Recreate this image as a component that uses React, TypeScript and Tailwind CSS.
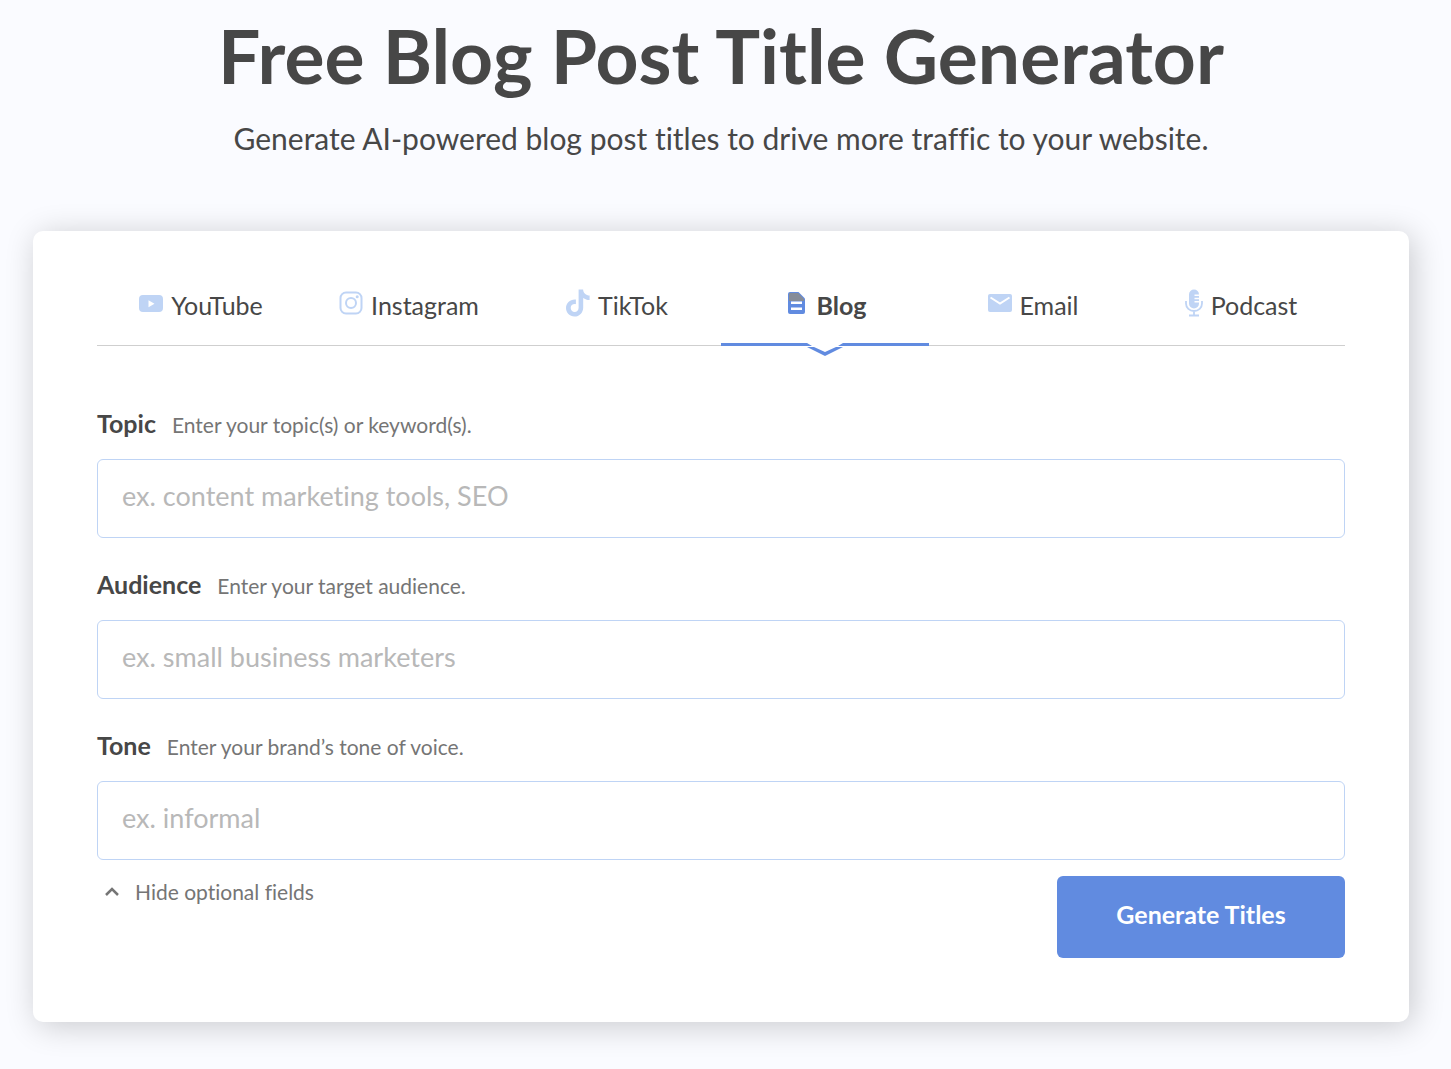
import { useState } from 'react';
import type { FormEvent, ReactNode } from 'react';

type Platform = {
  id: string;
  label: string;
  icon: ReactNode;
};

type Field = {
  id: string;
  label: string;
  hint: string;
  placeholder: string;
  optional: boolean;
};

const platforms: Platform[] = [
  {
    id: 'youtube',
    label: 'YouTube',
    icon: (
      <svg viewBox="0 0 24 17" className="mr-2 mb-1 h-[17px] w-6" fill="currentColor" aria-hidden="true">
        <path
          fillRule="evenodd"
          d="M4 0h16a4 4 0 0 1 4 4v9a4 4 0 0 1-4 4H4a4 4 0 0 1-4-4V4a4 4 0 0 1 4-4Zm5.5 5.200v7l6-3.500-6-3.500Z"
        />
      </svg>
    ),
  },
  {
    id: 'instagram',
    label: 'Instagram',
    icon: (
      <svg
        viewBox="0 0 24 24"
        className="mr-2 mb-1 size-6"
        fill="none"
        stroke="currentColor"
        strokeWidth="2"
        aria-hidden="true"
      >
        <rect x="1.5" y="1.5" width="21" height="21" rx="5.5" />
        <circle cx="12" cy="12" r="5" />
        <circle cx="18.2" cy="5.8" r="1.5" fill="currentColor" stroke="none" />
      </svg>
    ),
  },
  {
    id: 'tiktok',
    label: 'TikTok',
    icon: (
      <svg viewBox="0 0 24 27" className="mr-2 mb-1 h-7 w-6" fill="currentColor" aria-hidden="true">
        <path d="M12.6 0h4.5c.2 3.6 2.9 5.9 6.5 6.1v4.5c-2.5 0-4.6-.8-6.4-2.1v9.4c0 5.2-3.8 9.1-8.7 9.1C3.6 27 0 23.1 0 18.5c0-5.1 4.3-9.1 9.9-8.5v4.7c-3-.6-5.2 1.2-5.2 3.8 0 2.2 1.7 4 3.9 4 2.4 0 4-1.7 4-4.3Z" />
      </svg>
    ),
  },
  {
    id: 'blog',
    label: 'Blog',
    icon: (
      <svg viewBox="0 0 17 22" className="mr-3 mb-1 ml-1 h-[22px] w-[17px]" aria-hidden="true">
        <path
          fill="#618be0"
          d="M2 0h8.5L17 6.5V20a2 2 0 0 1-2 2H2a2 2 0 0 1-2-2V2a2 2 0 0 1 2-2Z"
        />
        <path fill="#858c99" d="M2 1h8.2L16 7v2H1V2a1 1 0 0 1 1-1Z" />
        <path fill="#fff" d="M3 9.500h11V12H3zM3 15.500h11V18H3z" />
      </svg>
    ),
  },
  {
    id: 'email',
    label: 'Email',
    icon: (
      <svg viewBox="0 0 24 18" className="mr-2 mb-1 h-[18px] w-6" aria-hidden="true">
        <rect width="24" height="18" rx="2" fill="currentColor" />
        <path d="m2.5 3.500 9.500 6 9.500-6" fill="none" stroke="#fff" strokeWidth="2" />
      </svg>
    ),
  },
  {
    id: 'podcast',
    label: 'Podcast',
    icon: (
      <svg viewBox="0 0 18 27" className="mr-2 mb-1 h-7 w-[18px]" fill="currentColor" aria-hidden="true">
        <path d="M9 0a5 5 0 0 1 5 5H9.500v1.500H14v1.700H9.500v1.500H14v1.700H9.500v1.500H14V14a5 5 0 0 1-10 0V5a5 5 0 0 1 5-5Z" />
        <path
          fill="none"
          stroke="currentColor"
          strokeWidth="1.8"
          d="M1 11.500V14c0 4.300 3.500 7.500 8 7.500s8-3.200 8-7.500v-2.500M9 21.500V26M4 26h10"
        />
      </svg>
    ),
  },
];

const fields: Field[] = [
  {
    id: 'topic',
    label: 'Topic',
    hint: 'Enter your topic(s) or keyword(s).',
    placeholder: 'ex. content marketing tools, SEO',
    optional: false,
  },
  {
    id: 'audience',
    label: 'Audience',
    hint: 'Enter your target audience.',
    placeholder: 'ex. small business marketers',
    optional: true,
  },
  {
    id: 'tone',
    label: 'Tone',
    hint: 'Enter your brand’s tone of voice.',
    placeholder: 'ex. informal',
    optional: true,
  },
];

function PlatformTab({
  platform,
  active,
  onSelect,
}: {
  platform: Platform;
  active: boolean;
  onSelect: () => void;
}) {
  return (
    <button
      type="button"
      role="tab"
      aria-selected={active}
      onClick={onSelect}
      className="relative flex h-[82px] flex-1 cursor-pointer items-center justify-center pt-0.5"
    >
      <span className="text-[#bfd4f5]">{platform.icon}</span>
      <span className={active ? 'font-bold' : ''}>{platform.label}</span>
      {active && (
        <span className="absolute inset-x-0 top-[80px] flex h-3">
          <span className="h-[3px] flex-1 bg-[#618be0]" />
          <svg viewBox="0 0 38 13" className="h-[13px] w-[38px]" aria-hidden="true">
            <path fill="#fff" d="M0 0h38v4L19 13 0 4Z" />
            <path fill="#618be0" d="M0 0h1l5 3H0ZM38 0h-1l-5 3h6ZM1 4h7l11 5 11-5h7L19 13Z" />
          </svg>
          <span className="h-[3px] flex-1 bg-[#618be0]" />
        </span>
      )}
    </button>
  );
}

export default function App() {
  const [platform, setPlatform] = useState('blog');
  const [showOptional, setShowOptional] = useState(true);
  const [values, setValues] = useState<Record<string, string>>({});

  const handleSubmit = (e: FormEvent) => {
    e.preventDefault();
  };

  const visibleFields = fields.filter((field) => showOptional || !field.optional);

  return (
    <main className="min-h-screen bg-[#fafbff] pt-2.5 pr-[42px] pb-12 pl-[33px] font-['Lato','Open_Sans',sans-serif] text-[#474747] [font-variant-ligatures:none]">
      <header className="text-center">
        <h1 className="text-[75px] leading-[90px] font-bold">Free Blog Post Title Generator</h1>
        <p className="mt-5 text-[30px] leading-9">
          Generate AI-powered blog post titles to drive more traffic to your website.
        </p>
      </header>

      <section className="mt-[75px] rounded-[10px] bg-white px-16 pt-8 pb-16 shadow-[4px_4px_32px_rgba(0,0,0,0.2)]">
        <div role="tablist" className="flex border-b border-[#cfcfcf] text-[25px] leading-8">
          {platforms.map((item) => (
            <PlatformTab
              key={item.id}
              platform={item}
              active={item.id === platform}
              onSelect={() => setPlatform(item.id)}
            />
          ))}
        </div>

        <form onSubmit={handleSubmit} className="mt-[63px]">
          <div className="flex flex-col gap-8">
            {visibleFields.map((field) => (
              <div key={field.id}>
                <label htmlFor={field.id} className="flex h-7 items-baseline gap-4 leading-7">
                  <span className="text-[25px] leading-7 font-bold">{field.label}</span>
                  <span className="text-[21px] text-[#757575]">{field.hint}</span>
                </label>
                <input
                  id={field.id}
                  type="text"
                  placeholder={field.placeholder}
                  value={values[field.id] ?? ''}
                  onChange={(e) => setValues({ ...values, [field.id]: e.target.value })}
                  className="mt-[22px] h-[79px] w-full rounded-md border border-[#bfd4f5] px-6 pb-1.5 text-[27px] outline-none placeholder:text-[#b8b8b8] focus:border-[#618be0]"
                />
              </div>
            ))}
          </div>

          <div className="mt-4 flex items-start justify-between">
            <button
              type="button"
              onClick={() => setShowOptional(!showOptional)}
              className="flex cursor-pointer items-center gap-4 pl-2 text-[21px] leading-8 text-[#757575]"
            >
              <svg
                viewBox="0 0 14 10"
                className={showOptional ? 'h-[10px] w-[14px]' : 'h-[10px] w-[14px] rotate-180'}
                fill="none"
                stroke="currentColor"
                strokeWidth="2.5"
                aria-hidden="true"
              >
                <path d="m1 8 6-6 6 6" />
              </svg>
              {showOptional ? 'Hide optional fields' : 'Show optional fields'}
            </button>
            <button
              type="submit"
              className="h-[82px] w-72 cursor-pointer rounded-md bg-[#618be0] pb-1 text-[25px] font-bold text-white"
            >
              Generate Titles
            </button>
          </div>
        </form>
      </section>
    </main>
  );
}
